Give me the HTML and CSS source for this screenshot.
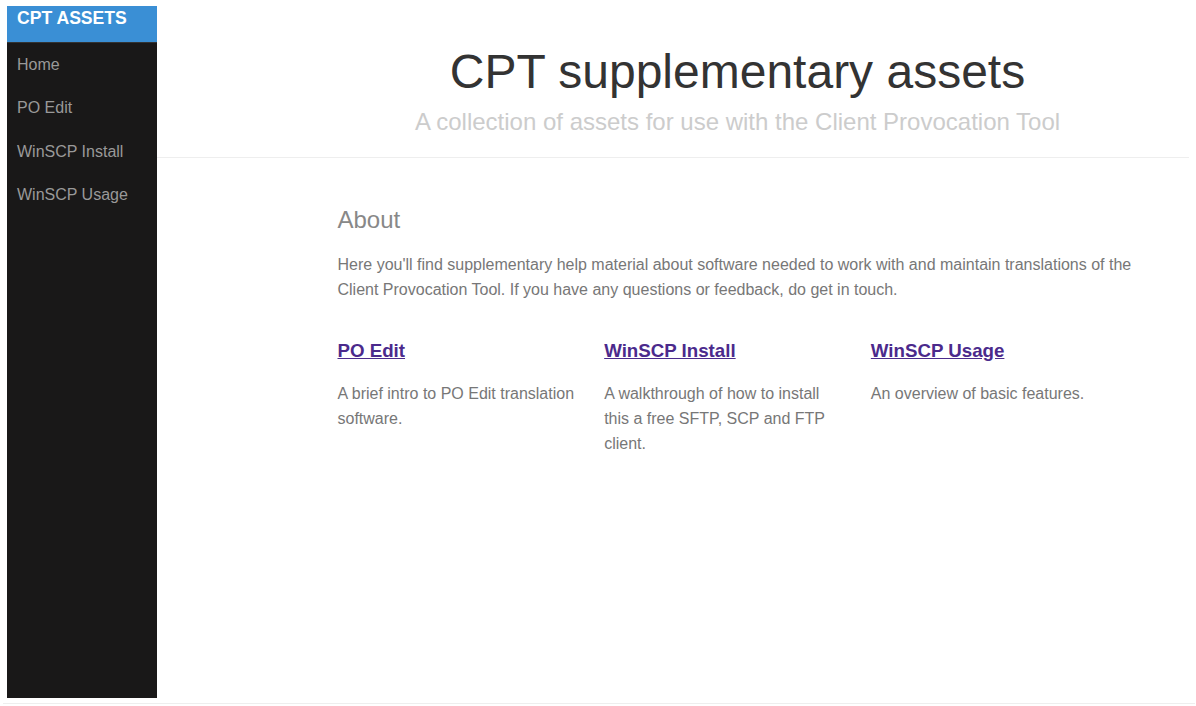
FILE: index.html
```html
<!DOCTYPE html>
<html lang="en">
<head>
<meta charset="utf-8">
<title>CPT supplementary assets</title>
<link rel="stylesheet" href="styles.css">
</head>
<body>
<div class="frame">
  <nav class="sidebar">
    <a class="menu-heading" href="#">CPT Assets</a>
    <ul class="menu-list">
      <li><a class="menu-link" href="#">Home</a></li>
      <li><a class="menu-link" href="#">PO Edit</a></li>
      <li><a class="menu-link" href="#">WinSCP Install</a></li>
      <li><a class="menu-link" href="#">WinSCP Usage</a></li>
    </ul>
  </nav>
  <main class="main">
    <header class="header">
      <h1 class="title">CPT supplementary assets</h1>
      <h2 class="subtitle">A collection of assets for use with the Client Provocation Tool</h2>
    </header>
    <section class="content">
      <h2 class="content-subhead">About</h2>
      <p class="intro">Here you'll find supplementary help material about software needed to work with and maintain translations of the Client Provocation Tool. If you have any questions or feedback, do get in touch.</p>
      <div class="cards">
        <div class="card">
          <h3 class="card-title"><a href="#">PO Edit</a></h3>
          <p class="card-text">A brief intro to PO Edit translation software.</p>
        </div>
        <div class="card">
          <h3 class="card-title"><a href="#">WinSCP Install</a></h3>
          <p class="card-text">A walkthrough of how to install this a free SFTP, SCP and FTP client.</p>
        </div>
        <div class="card">
          <h3 class="card-title"><a href="#">WinSCP Usage</a></h3>
          <p class="card-text">An overview of basic features.</p>
        </div>
      </div>
    </section>
  </main>
</div>
<div class="bottom-rule"></div>
</body>
</html>
```
FILE: styles.css
```css
html, body {
  margin: 0;
  padding: 0;
  background: #fff;
}
body {
  font-family: "Liberation Sans", Arial, sans-serif;
  font-size: 16px;
  color: #777;
  overflow: hidden;
  width: 1196px;
  height: 706px;
}
.frame {
  display: flex;
  margin: 6px 0 0 7px;
  width: 1182px;
  height: 692px;
  overflow: hidden;
  position: relative;
}
.frame::after {
  content: "";
  position: absolute;
  right: -5px;
  top: -6px;
  width: 1px;
  height: 172px;
  background: #eee;
}
.sidebar {
  flex: 0 0 150px;
  background: #191818;
  display: flex;
  flex-direction: column;
}
.menu-heading {
  display: block;
  background: #3a8fd5;
  color: #fff;
  font-size: 17.6px;
  font-weight: bold;
  text-transform: uppercase;
  text-decoration: none;
  line-height: 18px;
  padding: 3px 10px 15px;
}
.menu-list {
  list-style: none;
  margin: 0;
  padding: 0;
  border-top: 1px solid #333;
}
.menu-link {
  display: block;
  color: #999;
  text-decoration: none;
  font-size: 16px;
  line-height: 19.3px;
  padding: 12px 0 12px 10px;
}
.main {
  flex: 0 0 1161px;
}
.header {
  text-align: center;
  color: #333;
  padding: 38px 2em 21px;
  border-bottom: 1px solid #eee;
}
.title {
  margin: 0;
  font-size: 48px;
  font-weight: 300;
  line-height: 56px;
}
.subtitle {
  margin: 8px 0 0;
  font-size: 24px;
  font-weight: 300;
  line-height: 28px;
  color: #ccc;
}
.content {
  max-width: 800px;
  margin: 0 auto;
  padding: 0 2em;
  line-height: 25px;
}
.content-subhead {
  margin: 49px 0 19px;
  font-size: 24px;
  font-weight: 300;
  line-height: 25.6px;
  color: #888;
}
.intro {
  margin: 0;
}
.cards {
  display: grid;
  grid-template-columns: repeat(3, 1fr);
  margin-top: 36px;
}
.card {
  padding-right: 25px;
}
.card-title {
  margin: 0;
  font-size: 18.72px;
  font-weight: bold;
}
.card-title a {
  color: #4b2a8c;
}
.card-text {
  margin: 18px 0 0;
}
.bottom-rule {
  margin: 5px 0 0 3px;
  width: 1192px;
  height: 1px;
  background: #eee;
}
```
